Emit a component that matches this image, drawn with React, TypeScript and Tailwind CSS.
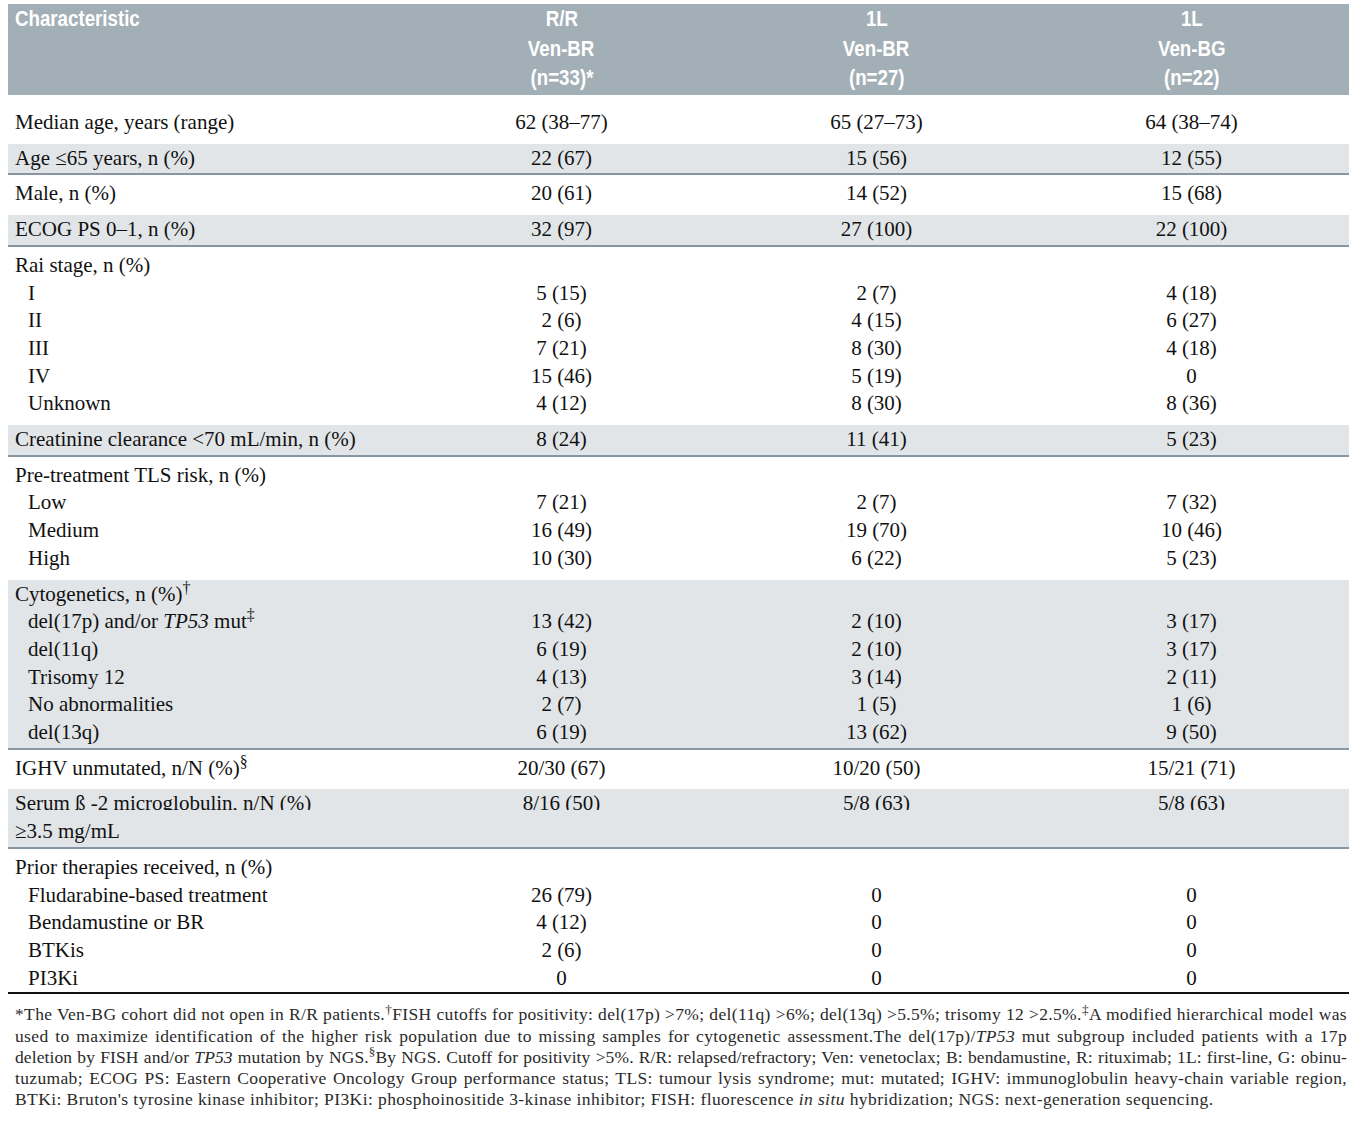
import React from 'react';

type Row = {
  label: React.ReactNode;
  indent?: boolean;
  values?: string[];
  clip?: boolean;
};

type Group = { shaded?: boolean; rows: Row[] };

const groups: Group[] = [
  { rows: [{ label: 'Median age, years (range)', values: ['62 (38–77)', '65 (27–73)', '64 (38–74)'] }] },
  { shaded: true, rows: [{ label: 'Age ≤65 years, n (%)', values: ['22 (67)', '15 (56)', '12 (55)'] }] },
  { rows: [{ label: 'Male, n (%)', values: ['20 (61)', '14 (52)', '15 (68)'] }] },
  { shaded: true, rows: [{ label: 'ECOG PS 0–1, n (%)', values: ['32 (97)', '27 (100)', '22 (100)'] }] },
  {
    rows: [
      { label: 'Rai stage, n (%)' },
      { label: 'I', indent: true, values: ['5 (15)', '2 (7)', '4 (18)'] },
      { label: 'II', indent: true, values: ['2 (6)', '4 (15)', '6 (27)'] },
      { label: 'III', indent: true, values: ['7 (21)', '8 (30)', '4 (18)'] },
      { label: 'IV', indent: true, values: ['15 (46)', '5 (19)', '0'] },
      { label: 'Unknown', indent: true, values: ['4 (12)', '8 (30)', '8 (36)'] },
    ],
  },
  {
    shaded: true,
    rows: [{ label: 'Creatinine clearance <70 mL/min, n (%)', values: ['8 (24)', '11 (41)', '5 (23)'] }],
  },
  {
    rows: [
      { label: 'Pre-treatment TLS risk, n (%)' },
      { label: 'Low', indent: true, values: ['7 (21)', '2 (7)', '7 (32)'] },
      { label: 'Medium', indent: true, values: ['16 (49)', '19 (70)', '10 (46)'] },
      { label: 'High', indent: true, values: ['10 (30)', '6 (22)', '5 (23)'] },
    ],
  },
  {
    shaded: true,
    rows: [
      { label: <>Cytogenetics, n (%)<sup>†</sup></> },
      {
        label: <>del(17p) and/or <i>TP53</i> mut<sup>‡</sup></>,
        indent: true,
        values: ['13 (42)', '2 (10)', '3 (17)'],
      },
      { label: 'del(11q)', indent: true, values: ['6 (19)', '2 (10)', '3 (17)'] },
      { label: 'Trisomy 12', indent: true, values: ['4 (13)', '3 (14)', '2 (11)'] },
      { label: 'No abnormalities', indent: true, values: ['2 (7)', '1 (5)', '1 (6)'] },
      { label: 'del(13q)', indent: true, values: ['6 (19)', '13 (62)', '9 (50)'] },
    ],
  },
  {
    rows: [
      { label: <>IGHV unmutated, n/N (%)<sup>§</sup></>, values: ['20/30 (67)', '10/20 (50)', '15/21 (71)'] },
    ],
  },
  {
    shaded: true,
    rows: [
      { label: 'Serum ß -2 microglobulin, n/N (%)', values: ['8/16 (50)', '5/8 (63)', '5/8 (63)'], clip: true },
      { label: '≥3.5 mg/mL' },
    ],
  },
  {
    rows: [
      { label: 'Prior therapies received, n (%)' },
      { label: 'Fludarabine-based treatment', indent: true, values: ['26 (79)', '0', '0'] },
      { label: 'Bendamustine or BR', indent: true, values: ['4 (12)', '0', '0'] },
      { label: 'BTKis', indent: true, values: ['2 (6)', '0', '0'] },
      { label: 'PI3Ki', indent: true, values: ['0', '0', '0'] },
    ],
  },
];

const headers = [
  ['R/R', 'Ven-BR', '(n=33)*'],
  ['1L', 'Ven-BR', '(n=27)'],
  ['1L', 'Ven-BG', '(n=22)'],
];

function HeadLine({ children, left }: { children: React.ReactNode; left?: boolean }) {
  return (
    <div className={left ? 'text-left' : 'text-center'}>
      <span className={`inline-block scale-x-[0.85] ${left ? 'origin-left' : 'origin-center'}`}>{children}</span>
    </div>
  );
}

function DataRow({ row }: { row: Row }) {
  // the reference cuts off the lower part of the first serum line
  const cell = row.clip ? 'h-[20px] overflow-hidden' : '';
  return (
    <div className={`grid grid-cols-[396px_315px_315px_315px] ${row.clip ? 'h-[27.7px]' : ''}`}>
      <div className={`${row.indent ? 'pl-[20px]' : 'pl-[7px]'} ${cell}`}>{row.label}</div>
      {(row.values ?? ['', '', '']).map((v, i) => (
        <div key={i} className={`text-center ${cell}`}>
          {v}
        </div>
      ))}
    </div>
  );
}

function FootLine({ children, last, className = '' }: { children: React.ReactNode; last?: boolean; className?: string }) {
  return (
    <div className={`whitespace-nowrap ${last ? 'text-left' : 'text-justify [text-align-last:justify]'} ${className}`}>
      {children}
    </div>
  );
}

export default function App() {
  return (
    <div className="min-h-screen bg-white pt-[4px] pl-[8px] pr-[6px]">
      <div className="w-[1341px]">
        {/* Header */}
        <div className="grid grid-cols-[396px_315px_315px_315px] h-[91px] bg-[#a3afb7] text-white font-bold text-[22px] leading-[29.5px] font-['Liberation_Sans',Arial,sans-serif]">
          <div className="pl-[7px]">
            <HeadLine left>Characteristic</HeadLine>
          </div>
          {headers.map((h) => (
            <div key={h.join()}>
              {h.map((line) => (
                <HeadLine key={line}>{line}</HeadLine>
              ))}
            </div>
          ))}
        </div>

        {/* Body */}
        <div className="mt-[9px] text-[21px] leading-[27.7px] text-[#111] font-['Liberation_Serif','Times_New_Roman',serif]">
          {groups.map((g, gi) => (
            <div
              key={gi}
              className={
                g.shaded
                  ? 'bg-[#e1e5e8] pt-[1px] pb-[1px] border-b-2 border-[#8796a2]'
                  : gi === groups.length - 1
                    ? 'pt-[5px] pb-0'
                    : 'pt-[5px] pb-[7px]'
              }
            >
              {g.rows.map((r, ri) => (
                <DataRow key={ri} row={r} />
              ))}
            </div>
          ))}
        </div>

        {/* Footnote */}
        <div className="border-t-2 border-[#111] pt-[10px] pl-[7px] pr-[2px] text-[17.5px] tracking-[0.35px] leading-[21.25px] text-[#2a2a2a] font-['Liberation_Serif','Times_New_Roman',serif]">
          <FootLine>
            *The Ven-BG cohort did not open in R/R patients.<sup>†</sup>FISH cutoffs for positivity: del(17p) &gt;7%; del(11q) &gt;6%; del(13q) &gt;5.5%; trisomy 12 &gt;2.5%.<sup>‡</sup>A modified hierarchical model was
          </FootLine>
          <FootLine>
            used to maximize identification of the higher risk population due to missing samples for cytogenetic assessment.The del(17p)/<i>TP53</i> mut subgroup included patients with a 17p
          </FootLine>
          <FootLine className="tracking-[0.1px]">
            deletion by FISH and/or <i>TP53</i> mutation by NGS.<sup>§</sup>By NGS. Cutoff for positivity &gt;5%. R/R: relapsed/refractory; Ven: venetoclax; B: bendamustine, R: rituximab; 1L: first-line, G: obinu-
          </FootLine>
          <FootLine>
            tuzumab; ECOG PS: Eastern Cooperative Oncology Group performance status; TLS: tumour lysis syndrome; mut: mutated; IGHV: immunoglobulin heavy-chain variable region,
          </FootLine>
          <FootLine last className="tracking-[0.42px]">
            BTKi: Bruton's tyrosine kinase inhibitor; PI3Ki: phosphoinositide 3-kinase inhibitor; FISH: fluorescence <i>in situ</i> hybridization; NGS: next-generation sequencing.
          </FootLine>
        </div>
      </div>
    </div>
  );
}
